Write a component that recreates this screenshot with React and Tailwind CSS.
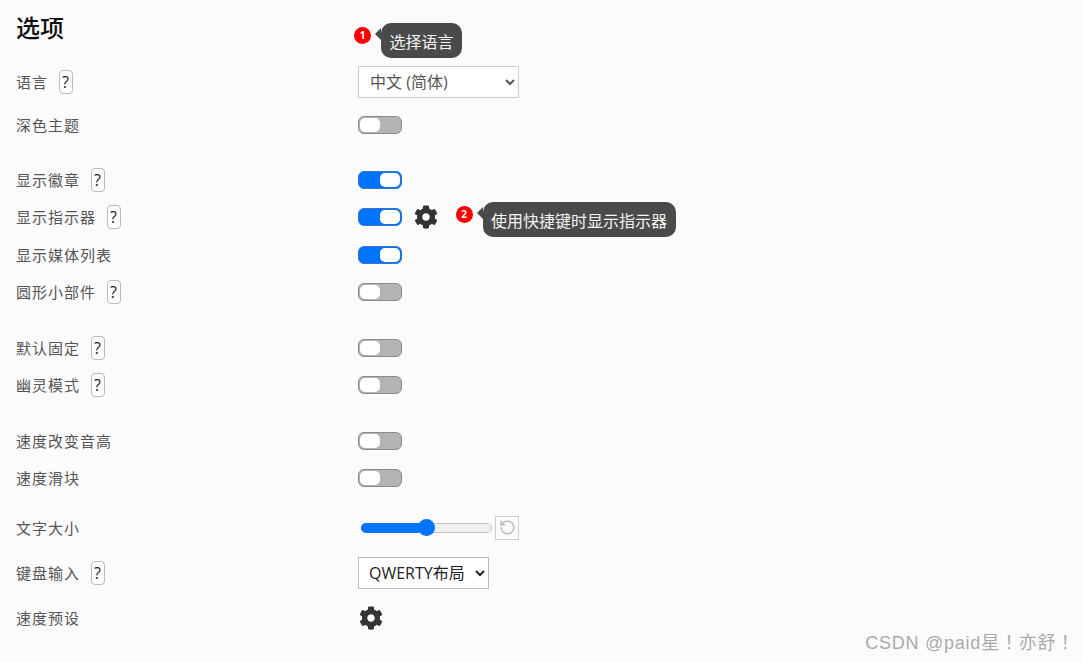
import React from "react";
import { FaCog } from "react-icons/fa";
import { RotateCcw } from "lucide-react";

const font = { fontFamily: '"Open Sans","Noto Sans CJK SC",sans-serif' };

function Help() {
  return (
    <span className="ml-[11px] flex h-[24px] w-[14px] shrink-0 items-center justify-center rounded-[4px] border border-[#bbbbbb] bg-white text-[16px] leading-none text-[#222]">
      ?
    </span>
  );
}

function Toggle({ on }) {
  return (
    <div
      className={
        on
          ? "flex h-[18px] w-[44px] items-center justify-end rounded-[6px] border border-[#3a76c4] bg-[#0073ff] p-[1px]"
          : "flex h-[18px] w-[44px] items-center justify-start rounded-[6px] border border-[#8a8a8a] bg-[#b4b4b4] p-[1px]"
      }
    >
      <div className="h-[14px] w-[20px] rounded-[5px] bg-white" />
    </div>
  );
}

function Gear({ className }) {
  return <FaCog className={className} size={24} color="#333333" />;
}

function Row({ label, help, children, className = "" }) {
  return (
    <div className={"flex h-[37.5px] items-center " + className}>
      <div className="flex w-[342px] shrink-0 items-center text-[15px] tracking-[1px] text-[#555]">
        <span>{label}</span>
        {help && <Help />}
      </div>
      <div className="flex items-center">{children}</div>
    </div>
  );
}

function Note({ n, text, className }) {
  return (
    <div className={"absolute flex items-start " + className}>
      <span className="mt-[4px] flex h-[17px] w-[17px] items-center justify-center rounded-full bg-[#ff0000] text-[10px] font-bold text-white">
        {n}
      </span>
      <span className="mt-[5px] ml-[4px] h-0 w-0 border-y-[6px] border-r-[6px] border-y-transparent border-r-[#4a4a4a]" />
      <span className="flex h-[35px] items-center rounded-[10px] bg-[#4a4a4a] px-[8.5px] pt-[2px] text-[16px] text-[#f4f4f4]">
        {text}
      </span>
    </div>
  );
}

export default function App() {
  return (
    <div className="relative h-[662px] w-[1082px] overflow-hidden bg-[#fbfbfb] pl-[16px]" style={font}>
      <h1 className="flex h-[63.5px] items-start pt-[11px] text-[24px] leading-[34px] font-medium text-[#111]">选项</h1>

      <Row label="语言" help>
        <select className="h-[32px] w-[161px] border border-[#cccccc] bg-white pl-[7px] text-[16px] text-[#555]">
          <option>中文 (简体)</option>
        </select>
      </Row>
      <Row label="深色主题" className="mt-[5px]"><Toggle /></Row>

      <Row label="显示徽章" help className="mt-[17.5px]"><Toggle on /></Row>
      <Row label="显示指示器" help>
        <Toggle on />
        <Gear className="ml-[12px]" />
      </Row>
      <Row label="显示媒体列表"><Toggle on /></Row>
      <Row label="圆形小部件" help><Toggle /></Row>

      <Row label="默认固定" help className="mt-[18px]"><Toggle /></Row>
      <Row label="幽灵模式" help><Toggle /></Row>

      <Row label="速度改变音高" className="mt-[18px]"><Toggle /></Row>
      <Row label="速度滑块"><Toggle /></Row>

      <Row label="文字大小" className="mt-[12px]">
        <div className="ml-[3px] flex h-[10px] w-[131px] items-center rounded-full border border-[#c4c4c4] bg-[#efefef]">
          <div className="-ml-px h-[10px] w-[58px] rounded-l-full bg-[#0073ff]" />
          <div className="-ml-[1px] h-[17px] w-[17px] rounded-full bg-[#0073ff]" />
        </div>
        <div className="ml-[3px] flex h-[24px] w-[24px] items-center justify-center border border-[#cccccc]">
          <RotateCcw size={17} color="#b8b8b8" strokeWidth={2} />
        </div>
      </Row>
      <Row label="键盘输入" help className="mt-[7.5px]">
        <select className="h-[32px] w-[131px] border border-[#bbbbbb] bg-white pl-[6px] text-[16px] text-[#222]">
          <option>QWERTY布局</option>
        </select>
      </Row>
      <Row label="速度预设" className="mt-[7.5px]"><Gear className="ml-[1px]" /></Row>

      <Note n="1" text="选择语言" className="left-[354px] top-[23px]" />
      <Note n="2" text="使用快捷键时显示指示器" className="left-[455.5px] top-[202px]" />

      <div className="absolute right-[7px] top-[630px] text-[18px] tracking-[0.77px] text-[#aaaaaa]" style={{ fontFamily: '"Liberation Sans","Noto Sans CJK TC",sans-serif' }}>
        CSDN @paid星！亦舒！
      </div>
    </div>
  );
}
